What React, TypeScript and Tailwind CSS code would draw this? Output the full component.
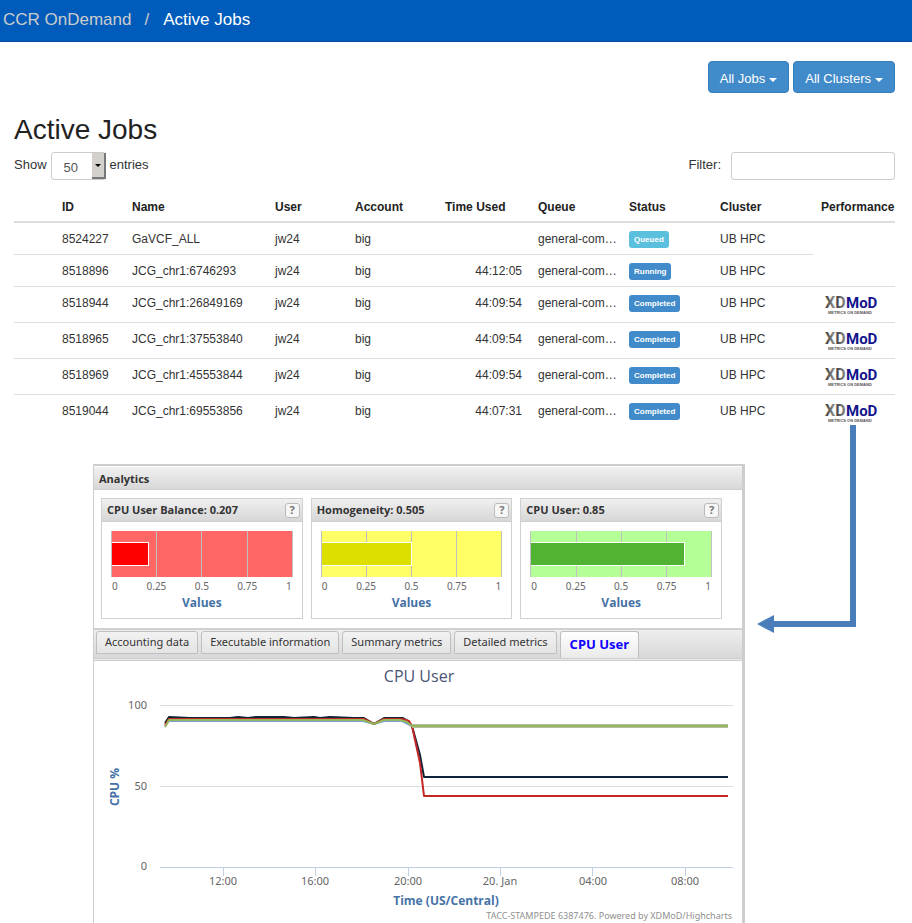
type Job = {
  id: string;
  name: string;
  time: string;
  status: "Queued" | "Running" | "Completed";
};

const jobs: Job[] = [
  { id: "8524227", name: "GaVCF_ALL", time: "", status: "Queued" },
  { id: "8518896", name: "JCG_chr1:6746293", time: "44:12:05", status: "Running" },
  { id: "8518944", name: "JCG_chr1:26849169", time: "44:09:54", status: "Completed" },
  { id: "8518965", name: "JCG_chr1:37553840", time: "44:09:54", status: "Completed" },
  { id: "8518969", name: "JCG_chr1:45553844", time: "44:09:54", status: "Completed" },
  { id: "8519044", name: "JCG_chr1:69553856", time: "44:07:31", status: "Completed" },
];

function Caret() {
  return <span className="ml-1 inline-block border-x-4 border-t-4 border-x-transparent border-t-white align-middle" />;
}

function MenuButton({ label }: { label: string }) {
  return (
    <button
      type="button"
      className="h-8 rounded border border-[#357ebd] bg-[#428bca] px-[11px] pt-1 text-[13px] leading-5 text-white"
    >
      {label}
      <Caret />
    </button>
  );
}

function XdmodLogo() {
  return (
    <svg viewBox="0 0 54 20" className="block h-5 w-[54px] overflow-visible" role="img" aria-label="XDMoD">
      <defs>
        <linearGradient id="xd" x1="0" y1="0" x2="1" y2="0">
          <stop offset="0" stopColor="#3a3a3a" />
          <stop offset="0.4" stopColor="#8a8a8a" />
          <stop offset="0.6" stopColor="#4a4a4a" />
          <stop offset="1" stopColor="#8c8c8c" />
        </linearGradient>
      </defs>
      <g fontFamily="Roboto, sans-serif" fontWeight="700" fontSize="16">
        <text x="1" y="13" fill="url(#xd)">XD</text>
        <text x="22" y="13" fill="#14148c" fontSize="15">MoD</text>
      </g>
      <text x="4" y="19" fontFamily="'Liberation Sans', sans-serif" fontWeight="700" fontSize="4" fill="#555">
        METRICS ON DEMAND
      </text>
    </svg>
  );
}

function StatusLabel({ status }: { status: Job["status"] }) {
  return (
    <span
      className={`block w-fit rounded-[3px] px-[5px] text-[8px] leading-[17px] font-bold text-white ${
        status === "Queued" ? "bg-[#5bc0de]" : "bg-[#428bca]"
      }`}
    >
      {status}
    </span>
  );
}

function JobsTable() {
  return (
    <table className="mt-[11px] w-full table-fixed border-collapse text-left text-[12px] leading-[17px] text-[#333]">
      <colgroup>
        <col className="w-[40px]" />
        <col className="w-[70px]" />
        <col className="w-[143px]" />
        <col className="w-[80px]" />
        <col className="w-[90px]" />
        <col className="w-[93px]" />
        <col className="w-[91px]" />
        <col className="w-[91px]" />
        <col className="w-[101px]" />
        <col className="w-[82px]" />
      </colgroup>
      <thead>
        <tr className="h-[30px] border-b-2 border-[#ddd] align-top whitespace-nowrap text-[#222] [&>th]:pt-[7px] [&>th]:pl-2">
          <th />
          <th>ID</th>
          <th>Name</th>
          <th>User</th>
          <th>Account</th>
          <th>Time Used</th>
          <th>Queue</th>
          <th>Status</th>
          <th>Cluster</th>
          <th>Performance</th>
        </tr>
      </thead>
      <tbody>
        {jobs.map((job, i) => {
          const done = job.status === "Completed";
          return (
            <tr
              key={job.id}
              className={`align-top whitespace-nowrap [&>td]:px-2 [&>td]:pt-2 ${done ? "h-9" : "h-8"} ${
                i === 0
                  ? ""
                  : i === 1
                    ? "[&>td:not(:last-child)]:border-t [&>td]:border-[#ddd]"
                    : "[&>td]:border-t [&>td]:border-[#ddd]"
              }`}
            >
              <td />
              <td>{job.id}</td>
              <td>{job.name}</td>
              <td>jw24</td>
              <td>big</td>
              <td className="text-right">{job.time}</td>
              <td>general-com…</td>
              <td>
                <StatusLabel status={job.status} />
              </td>
              <td>UB HPC</td>
              <td>
                {done && (
                  <a href="#analytics" className="ml-[3px] block">
                    <XdmodLogo />
                  </a>
                )}
              </td>
            </tr>
          );
        })}
      </tbody>
    </table>
  );
}

const gauges = [
  { title: "CPU User Balance: 0.207", value: 0.207, area: "bg-[#ff6666]", bar: "bg-[#ff0000]" },
  { title: "Homogeneity: 0.505", value: 0.5, area: "bg-[#ffff66]", bar: "bg-[#dddf00]" },
  { title: "CPU User: 0.85", value: 0.85, area: "bg-[#b5ff97]", bar: "bg-[#50b432]" },
];

function Gauge({ title, value, area, bar }: (typeof gauges)[number]) {
  return (
    <div className="border border-[#d0d0d0] bg-white pb-2">
      <div className="flex h-[23px] items-center justify-between border-b border-[#d0d0d0] bg-linear-to-b from-[#f0f0f0] to-[#d7d7d7] pr-0.5 pl-[5px]">
        <h3 className="font-['Open_Sans','Noto_Sans',sans-serif] text-[11px] font-bold whitespace-nowrap text-[#333]">
          {title}
        </h3>
        <button
          type="button"
          aria-label={`Help for ${title}`}
          className="flex size-[15px] items-center justify-center rounded-[3px] border border-[#bbb] bg-[#f6f6f6] text-[11px] font-bold text-[#777]"
        >
          ?
        </button>
      </div>
      <div className={`relative mx-[9px] mt-[9px] flex h-[46px] border-l border-[#c0c0c0] ${area}`}>
        <span className="flex-1 border-r border-[#c0c0c0]" />
        <span className="flex-1 border-r border-[#c0c0c0]" />
        <span className="flex-1 border-r border-[#c0c0c0]" />
        <span className="flex-1 border-r border-[#c0c0c0]" />
        <span
          className={`absolute top-[11px] left-0 h-6 border border-l-0 border-white ${bar}`}
          style={{ width: `${value * 100}%` }}
        />
      </div>
      <div className="mx-[9px] grid grid-cols-[1fr_2fr_2fr_2fr_1fr] text-center text-[10px] leading-[18px] text-[#666]">
        <span className="pl-px text-left">0</span>
        <span>0.25</span>
        <span>0.5</span>
        <span>0.75</span>
        <span className="pr-px text-right">1</span>
      </div>
      <div className="text-center font-['Open_Sans','Noto_Sans',sans-serif] text-[12px] leading-[15px] font-bold text-[#4572a7]">
        Values
      </div>
    </div>
  );
}

const tabs = ["Accounting data", "Executable information", "Summary metrics", "Detailed metrics"];

function TabStrip() {
  return (
    <div>
      <div
        role="tablist"
        className="flex h-[30px] items-start gap-[3px] border-t-2 border-[#d0d0d0] bg-linear-to-b from-[#eeeeee] to-[#d8d8d8] pt-px pl-0.5"
      >
        {tabs.map((t) => (
          <button
            key={t}
            type="button"
            role="tab"
            aria-selected="false"
            className="h-[23px] rounded-t-[3px] border border-[#bfbfbf] bg-linear-to-b from-[#f2f2f2] to-[#e4e4e4] px-2 pb-0.5 text-[11px] leading-4 whitespace-nowrap text-[#333]"
          >
            {t}
          </button>
        ))}
        <button
          type="button"
          role="tab"
          aria-selected="true"
          className="h-[27px] rounded-t-[3px] border border-b-0 border-[#bfbfbf] bg-linear-to-b from-white to-[#eaeaea] px-[9px] pb-0.5 text-[13px] leading-4 font-bold whitespace-nowrap text-[#1100ff]"
        >
          CPU User
        </button>
      </div>
      <div className="h-[3px] border-y border-[#cdcdcd] bg-[#eaeaea]" />
    </div>
  );
}

const xTicks = [
  { x: 129, label: "12:00" },
  { x: 221, label: "16:00" },
  { x: 314, label: "20:00" },
  { x: 406, label: "20. Jan" },
  { x: 499, label: "04:00" },
  { x: 591, label: "08:00" },
];

function CpuChart() {
  return (
    <svg
      viewBox="0 0 648 262"
      className="block w-full bg-white"
      role="img"
      aria-label="CPU User over time"
      fontFamily="'Noto Sans', 'Open Sans', sans-serif"
    >
      <text x="325" y="21" textAnchor="middle" fontFamily="'Open Sans', sans-serif" fontSize="16" fill="#4a5474">
        CPU User
      </text>
      <path d="M66 44.5H639M66 125.5H639" stroke="#dcdcdc" />
      <path d="M66 206.5H639M129.5 206v9M221.5 206v9M314.5 206v9M406.5 206v9M498.5 206v9M591.5 206v9" stroke="#c0d0e0" fill="none" />
      <g fontSize="11" fill="#666" textAnchor="end">
        <text x="53" y="48">100</text>
        <text x="53" y="129">50</text>
        <text x="53" y="209">0</text>
      </g>
      <g fontSize="11" fill="#666" textAnchor="middle">
        {xTicks.map((t) => (
          <text key={t.x} x={t.x} y="224">{t.label}</text>
        ))}
      </g>
      <g fontFamily="'Open Sans', sans-serif" fontSize="12" fontWeight="700" fill="#4572a7" textAnchor="middle">
        <text transform="translate(25 126) rotate(-90)">CPU %</text>
        <text x="352" y="244">Time (US/Central)</text>
      </g>
      <text x="638" y="258" textAnchor="end" fontSize="9" fill="#909090">
        TACC-STAMPEDE 6387476. Powered by XDMoD/Highcharts
      </text>
      <g fill="none" strokeWidth="2" strokeLinejoin="round">
        <path stroke="#77a1e5" d="M71 65L75 60H269L280 63L290 60H308L318 65H634" />
        <path stroke="#0d233a" d="M71 62L75 56L96 57H110L128 57L136 57L144 56L154 57L162 56L190 56L200 57L220 56L226 57L236 56L260 57L270 57L280 63L290 57L309 57L314 60L318 65L326 94L330 116H634" />
        <path stroke="#c42525" d="M71 64L75 58H270L280 63L290 58H308L315 60L318 65L326 102L330 135H634" />
        <path stroke="#b4bca8" strokeWidth="4" d="M318 65H634" />
        <path stroke="#94b858" d="M71 66L75 59H269L280 63L290 59H306L313 61L318 65H634" />
      </g>
    </svg>
  );
}

function Analytics() {
  return (
    <section
      id="analytics"
      className="mt-[39px] min-w-0 flex-1 border-t-2 border-r-3 border-l border-[#cdcdcd] font-['Noto_Sans','Open_Sans',sans-serif]"
    >
      <h2 className="h-6 border-t border-b border-t-white border-b-[#d0d0d0] bg-linear-to-b from-[#f0f0f0] to-[#d8d8d8] pl-[5px] font-['Open_Sans','Noto_Sans',sans-serif] text-[11px] leading-[23px] font-bold text-[#333]">
        Analytics
      </h2>
      <div className="grid grid-cols-3 gap-2 pt-2 pr-5 pb-[9px] pl-[7px]">
        {gauges.map((g) => (
          <Gauge key={g.title} {...g} />
        ))}
      </div>
      <TabStrip />
      <CpuChart />
    </section>
  );
}

function FlowArrow() {
  return (
    <svg viewBox="0 0 100 210" className="ml-3 h-[210px] w-[100px] shrink-0" aria-hidden="true">
      <path d="M96 0V199H16" fill="none" stroke="#4a7ebb" strokeWidth="6" />
      <path d="M0 199L17 190V208Z" fill="#4a7ebb" />
    </svg>
  );
}

export default function App() {
  return (
    <div className="overflow-hidden bg-white font-['Liberation_Sans',Arial,sans-serif] text-[#333]">
      <nav className="flex h-[42px] items-start border-b border-[#004c9e] bg-[#005bbb] pt-2 pl-[3px] text-[17px] leading-6">
        <a href="#home" className="text-[#cccccc]">CCR OnDemand</a>
        <span className="pr-[14px] pl-[13px] text-[#cccccc]">/</span>
        <a href="#jobs" className="text-white">Active Jobs</a>
      </nav>
      <main>
        <div className="mr-[17px] ml-[14px]">
          <div className="flex justify-end gap-1 pt-[19px]">
            <MenuButton label="All Jobs" />
            <MenuButton label="All Clusters" />
          </div>
          <h1 className="mt-[21px] text-[28px] leading-8 text-[#222]">Active Jobs</h1>
          <div className="mt-1.5 flex items-start justify-between text-[13px] leading-[26px]">
            <label className="flex gap-1">
              Show
              <span className="relative">
                <select
                  defaultValue="50"
                  className="h-7 w-[55px] appearance-none rounded-[3px] border border-[#ccc] bg-white pt-0.5 pl-3 text-[13px] text-[#555]"
                >
                  <option>50</option>
                </select>
                <span className="pointer-events-none absolute top-px right-0 flex h-[26px] w-[14px] items-center justify-center border-r-2 border-b-2 border-[#777] bg-[#d4d0cc]">
                  <span className="border-x-3 border-t-3 border-x-transparent border-t-black" />
                </span>
              </span>
              entries
            </label>
            <label className="flex gap-[10px]">
              Filter:
              <input type="text" className="h-7 w-[164px] rounded-[3px] border border-[#ccc] bg-white px-2" />
            </label>
          </div>
          <JobsTable />
        </div>
        <div className="-mt-[5px] mr-[55px] ml-[93px] flex items-start">
          <Analytics />
          <FlowArrow />
        </div>
      </main>
    </div>
  );
}
